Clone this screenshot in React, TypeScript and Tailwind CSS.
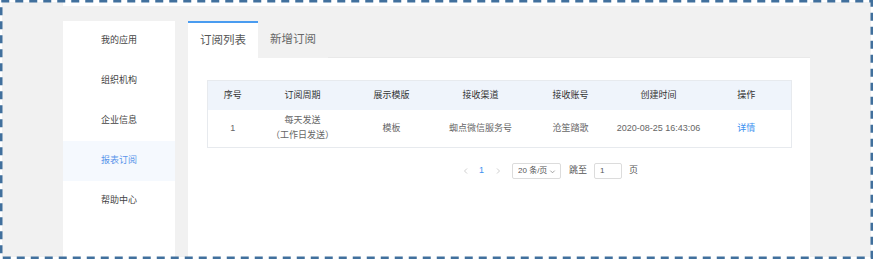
import { FC } from 'react';

const MENU = ['我的应用', '组织机构', '企业信息', '报表订阅', '帮助中心'] as const;
const ACTIVE_MENU = '报表订阅';

const COLUMNS = [
  { title: '序号', width: 50 },
  { title: '订阅周期', width: 90 },
  { title: '展示模版', width: 88 },
  { title: '接收渠道', width: 90 },
  { title: '接收账号', width: 90 },
  { title: '创建时间', width: 86 },
  { title: '操作', width: 90 },
] as const;

const App: FC = () => {
  return (
    <div className="relative w-[873px] h-[259px] overflow-hidden bg-white font-['Liberation_Sans','Noto_Sans_CJK_SC',sans-serif]">
      {/* 画面本体 */}
      <div className="absolute inset-[2px] bg-[#f1f1f1] flex flex-col">
        {/* 上部の白い帯 */}
        <div className="ml-[61px] w-[747px] h-[4px] bg-white" />

        <div className="flex flex-1 mt-[15px] ml-[61px]">
          {/* サイドメニュー */}
          <div className="w-[112px] bg-white flex flex-col">
            {MENU.map(item => (
              <div
                key={item}
                className={`h-[40px] flex items-center justify-center text-[9px] ${
                  item === ACTIVE_MENU
                    ? 'bg-[#f5f9fe] text-[#5a95ea]'
                    : 'text-[#444]'
                }`}
              >
                {item}
              </div>
            ))}
          </div>

          {/* メイン */}
          <div className="ml-[13px] w-[622px] flex flex-col">
            {/* タブ */}
            <div className="flex h-[37px]">
              <div className="w-[70px] bg-white border-t-2 border-[#4a9cf0] flex items-center justify-center text-[11.5px] text-[#555]">
                订阅列表
              </div>
              <div className="w-[70px] flex items-center justify-center text-[11.5px] text-[#666]">
                新增订阅
              </div>
              <div className="flex-1 border-b border-[#e9e9e9]" />
            </div>

            <div className="flex-1 bg-white pt-[22px] px-[19px]">
              {/* テーブル */}
              <table className="w-[584px] table-fixed border-collapse border border-[#e7eaee] text-[9px]">
                <colgroup>
                  {COLUMNS.map(col => (
                    <col key={col.title} style={{ width: col.width }} />
                  ))}
                </colgroup>
                <thead>
                  <tr className="h-[29px] bg-[#eff4fb] text-[#333]">
                    {COLUMNS.map(col => (
                      <th key={col.title} className="font-normal text-center">
                        {col.title}
                      </th>
                    ))}
                  </tr>
                </thead>
                <tbody>
                  <tr className="h-[38px] text-[#666] text-center">
                    <td>1</td>
                    <td className="leading-[15px]">
                      每天发送
                      <br />（工作日发送）
                    </td>
                    <td>模板</td>
                    <td>蜘点微信服务号</td>
                    <td>沧笙踏歌</td>
                    <td>2020-08-25 16:43:06</td>
                    <td className="text-[#3d8ff0]">详情</td>
                  </tr>
                </tbody>
              </table>

              {/* ページネーション */}
              <div className="mt-[15px] flex items-center pl-[255px] text-[9px] text-[#555]">
                <svg className="w-[8px] h-[8px] text-[#c8c8c8]" viewBox="0 0 8 8" fill="none">
                  <path d="M5 1.5L2.5 4L5 6.5" stroke="currentColor" strokeWidth="0.9" />
                </svg>
                <span className="ml-[9px] text-[#3d8ff0]">1</span>
                <svg className="ml-[10px] w-[8px] h-[8px] text-[#c8c8c8]" viewBox="0 0 8 8" fill="none">
                  <path d="M3 1.5L5.5 4L3 6.5" stroke="currentColor" strokeWidth="0.9" />
                </svg>
                <div className="ml-[10px] w-[49px] h-[16px] border border-[#dcdcdc] rounded-[2px] flex items-center pl-[5px] gap-[2px] text-[8px]">
                  <span>20 条/页</span>
                  <svg className="w-[7px] h-[7px] text-[#888]" viewBox="0 0 8 8" fill="none">
                    <path d="M1.5 3L4 5.5L6.5 3" stroke="currentColor" strokeWidth="0.9" />
                  </svg>
                </div>
                <span className="ml-[8px]">跳至</span>
                <div className="ml-[7px] w-[28px] h-[16px] border border-[#dcdcdc] rounded-[2px] flex items-center pl-[5px] text-[8px]">
                  1
                </div>
                <span className="ml-[7px]">页</span>
              </div>
            </div>
          </div>
        </div>
      </div>

      {/* 点線の枠 */}
      <svg className="absolute inset-0 pointer-events-none" width="873" height="259">
        <rect
          x="1.25"
          y="1.25"
          width="870.5"
          height="256.5"
          fill="none"
          stroke="#41709d"
          strokeWidth="2.5"
          strokeDasharray="8 6"
        />
      </svg>
    </div>
  );
};

export default App;
